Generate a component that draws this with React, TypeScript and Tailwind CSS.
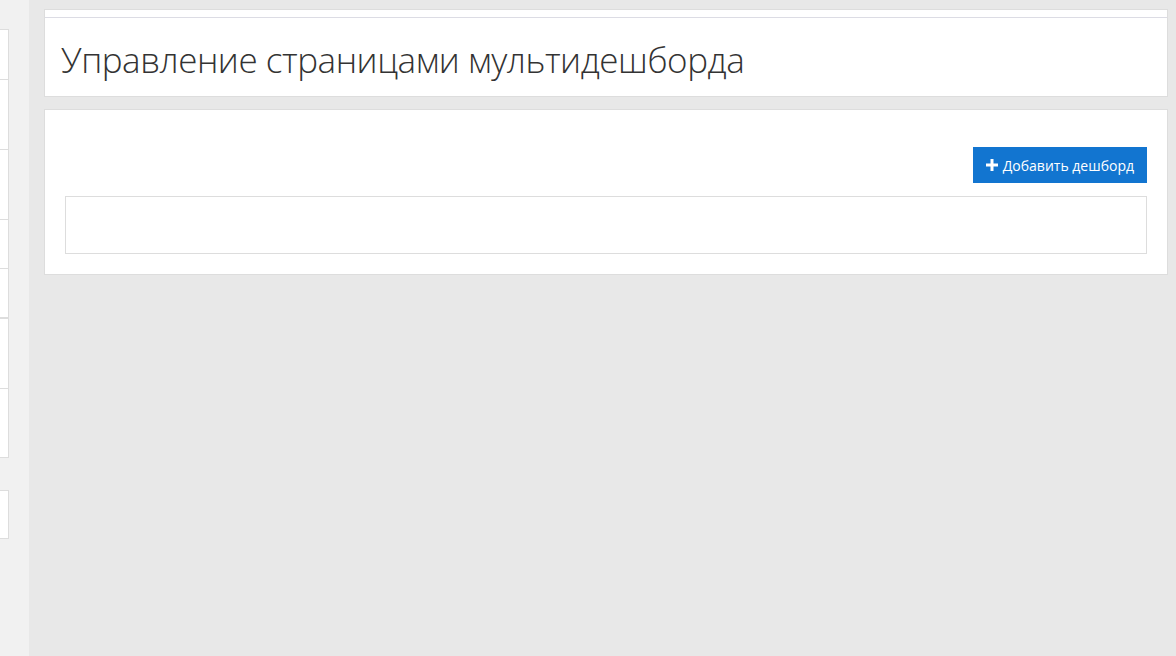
import React from "react";

export default function App() {
  return (
    <div className="flex h-[656px] w-[1176px] overflow-hidden bg-[#e8e8e8]" style={{ fontFamily: '"Open Sans", "Liberation Sans", sans-serif' }}>
      {/* left sidebar */}
      <div className="flex w-[29px] shrink-0 flex-col bg-[#f1f1f1] pt-[29px]">
        <div className="w-[9px] border-r border-t border-[#dddddd] bg-white">
          <div className="h-[50px] border-b border-[#dddddd]" />
          <div className="h-[70px] border-b border-[#dddddd]" />
          <div className="h-[70px] border-b border-[#dddddd]" />
          <div className="h-[49px] border-b border-[#dddddd]" />
          <div className="h-[50px] border-b-2 border-[#dddddd]" />
          <div className="h-[70px] border-b border-[#dddddd]" />
          <div className="h-[69px] border-b border-[#dddddd]" />
        </div>
        <div className="mt-[32px] h-[49px] w-[9px] border border-l-0 border-[#dddddd] bg-white" />
      </div>

      {/* main */}
      <div className="flex flex-1 flex-col pl-[15px] pr-[8px] pt-[9px]">
        <div className="border border-[#dddddd] bg-white">
          <div className="h-[8px] border-b border-[#dcdce4]" />
          <div className="flex h-[78px] items-center pl-[16px] pt-[5px]">
            <h1 className="text-[35px] font-light leading-none tracking-[-0.45px] text-[#333333]">
              Управление страницами мультидешборда
            </h1>
          </div>
        </div>

        <div className="mt-[12px] border border-[#dddddd] bg-white px-[20px] pb-[20px] pt-[37px]">
          <div className="flex justify-end">
            <button className="flex h-[36px] items-center gap-[5px] bg-[#1275d0] px-[13px] text-[14px] text-white">
              <svg width="12" height="12" viewBox="0 0 12 12" className="mt-[-1px]">
                <path d="M4.5 0h3v4.5H12v3H7.5V12h-3V7.5H0v-3h4.5z" fill="white" />
              </svg>
              <span>Добавить дешборд</span>
            </button>
          </div>
          <div className="mt-[13px] h-[58px] border border-[#dddddd]" />
        </div>
      </div>
    </div>
  );
}
